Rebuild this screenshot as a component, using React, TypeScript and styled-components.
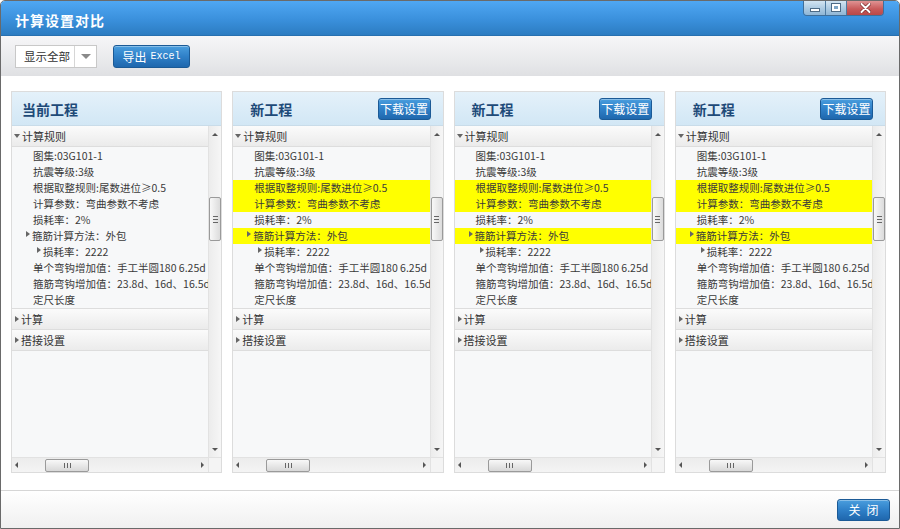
import React from 'react';
import styled, { createGlobalStyle } from 'styled-components';

const GlobalStyle = createGlobalStyle`
  html, body { margin: 0; padding: 0; background: #fff; }
  body { font-family: "Noto Sans CJK SC", "Noto Sans", sans-serif; }
  * { box-sizing: border-box; }
`;

const Window = styled.div`
  width: 900px;
  height: 529px;
  display: flex;
  flex-direction: column;
  border: 1px solid #6a6a6a;
  border-radius: 5px 5px 0 0;
  overflow: hidden;
  background: #fff;
`;

const TitleBar = styled.div`
  height: 35px;
  flex: none;
  display: flex;
  align-items: flex-start;
  justify-content: space-between;
  background: linear-gradient(#4fa7f3, #3a90dc 55%, #2c7cc1);
  border-bottom: 1px solid #2770b0;
`;

const Title = styled.div`
  color: #fff;
  font-size: 14px;
  font-weight: bold;
  letter-spacing: 1px;
  padding: 9px 0 0 14px;
`;

const Controls = styled.div`
  display: flex;
  margin-right: 15px;
  margin-top: -1px;
  border: 1px solid #3f6f9a;
  border-top: none;
  border-radius: 0 0 4px 4px;
  overflow: hidden;
  height: 16px;
`;

const CtrlBtn = styled.div<{ $close?: boolean; $w: number }>`
  width: ${p => p.$w}px;
  display: flex;
  align-items: center;
  justify-content: center;
  background: ${p =>
    p.$close
      ? 'linear-gradient(#e39a9a, #c85a5a 60%, #b94848)'
      : 'linear-gradient(#d8e8f4, #a9c8e0 60%, #8fb6d6)'};
  & + & { border-left: 1px solid #4e7aa0; }
`;

const MinGlyph = styled.div`
  width: 10px;
  height: 4px;
  background: #fff;
  border: 1px solid #4d6b86;
  margin-top: 4px;
`;

const MaxGlyph = styled.div`
  width: 10px;
  height: 9px;
  border: 1px solid #4d6b86;
  background: #fff;
  position: relative;
  &::after {
    content: '';
    position: absolute;
    left: 2px; top: 2px; right: 2px; bottom: 2px;
    background: #7fa6c6;
  }
`;

const Toolbar = styled.div`
  height: 40px;
  flex: none;
  display: flex;
  align-items: center;
  gap: 16px;
  padding-left: 14px;
  background: linear-gradient(#f6f6f8, #e9eaec 60%, #dfe0e3);
`;

const Select = styled.div`
  width: 82px;
  height: 23px;
  display: flex;
  align-items: center;
  background: #fff;
  border: 1px solid #c8c8c8;
  font-size: 11.5px;
  color: #333;
`;

const SelectText = styled.div`
  flex: 1;
  padding-left: 8px;
  border-right: 1px solid #d6d6d6;
  height: 100%;
  line-height: 21px;
`;

const SelectArrow = styled.div`
  width: 21px;
  display: flex;
  justify-content: center;
  &::before {
    content: '';
    border-left: 5px solid transparent;
    border-right: 5px solid transparent;
    border-top: 5px solid #8a8a8a;
  }
`;

const BlueButton = styled.div<{ $w: number; $h: number }>`
  width: ${p => p.$w}px;
  height: ${p => p.$h}px;
  display: flex;
  align-items: center;
  justify-content: center;
  color: #fff;
  font-size: 12px;
  border: 1px solid #1b5a96;
  border-radius: 3px;
  background: linear-gradient(#4a9ede, #2f80c8 50%, #1f67ad);
  box-shadow: inset 0 1px 0 rgba(255, 255, 255, 0.35);
`;

const Mono = styled.span`
  font-family: "Liberation Mono", monospace;
  font-size: 10px;
  margin-left: 4px;
`;

const Content = styled.div`
  flex: 1;
  display: grid;
  grid-template-columns: repeat(4, 1fr);
  gap: 10px;
  padding: 15px 13px 17px 10px;
  background: #fff;
`;

const Panel = styled.div`
  display: flex;
  flex-direction: column;
  border: 1px solid #dcdcdc;
  min-width: 0;
  background: #f7f8f9;
`;

const PanelHeader = styled.div`
  height: 34px;
  flex: none;
  display: flex;
  align-items: center;
  justify-content: space-between;
  padding: 0 12px 0 0;
  background: linear-gradient(#e4f1fa, #d2e7f5);
  border-bottom: 1px solid #c9dce9;
`;

const PanelTitle = styled.div`
  width: 76px;
  text-align: center;
  font-size: 14px;
  font-weight: bold;
  color: #1e4a78;
`;

const Tree = styled.div`
  flex: 1;
  display: grid;
  grid-template-columns: 1fr 13px;
  grid-template-rows: 1fr 15px;
  min-height: 0;
`;

const TreeBody = styled.div`
  overflow: hidden;
  font-size: 10.5px;
  color: #3a3a3a;
  white-space: nowrap;
`;

const SectionHead = styled.div<{ $open?: boolean }>`
  height: 21px;
  display: flex;
  align-items: center;
  padding-left: 1px;
  font-size: 11px;
  color: #333;
  background: linear-gradient(#fbfbfb, #ebebeb);
  border-bottom: 1px solid #dddddd;
  &::before {
    content: '';
    margin-right: 2px;
    ${p =>
      p.$open
        ? 'border-left: 3px solid transparent; border-right: 3px solid transparent; border-top: 4px solid #666; margin-left: 1px;'
        : 'border-top: 3px solid transparent; border-bottom: 3px solid transparent; border-left: 4px solid #666; margin-left: 2px;'}
  }
`;

const Items = styled.div`
  padding: 1px 0 0;
  border-bottom: 1px solid #dddddd;
`;

const Item = styled.div<{ $level: number; $hl?: boolean; $arrow?: boolean }>`
  height: 16px;
  line-height: 16px;
  display: flex;
  align-items: center;
  padding-left: ${p => (p.$arrow ? 14 : 21) + (p.$level - 1) * 11}px;
  background: ${p => (p.$hl ? '#ffff00' : 'transparent')};
  ${p =>
    p.$arrow
      ? `&::before {
          content: '';
          border-top: 3px solid transparent;
          border-bottom: 3px solid transparent;
          border-left: 4px solid #666;
          margin-right: 2px;
          margin-top: -4px;
        }`
      : ''}
`;

const VScroll = styled.div`
  display: flex;
  flex-direction: column;
  align-items: center;
  background: linear-gradient(90deg, #ececec, #f6f6f6);
  border-left: 1px solid #e2e2e2;
`;

const ArrowUp = styled.div`
  margin-top: 7px;
  border-left: 3px solid transparent;
  border-right: 3px solid transparent;
  border-bottom: 3px solid #555;
`;

const ArrowDown = styled.div`
  margin-bottom: 6px;
  border-left: 3px solid transparent;
  border-right: 3px solid transparent;
  border-top: 3px solid #555;
`;

const VThumb = styled.div`
  margin-top: 61px;
  width: 12px;
  height: 44px;
  border: 1px solid #9a9a9a;
  border-radius: 2px;
  background: linear-gradient(90deg, #f8f8f8, #dcdcdc);
  display: flex;
  align-items: center;
  justify-content: center;
  &::before {
    content: '';
    width: 5px;
    height: 5px;
    border-top: 1px solid #666;
    border-bottom: 1px solid #666;
    background: linear-gradient(transparent 40%, #666 40%, #666 60%, transparent 60%);
  }
`;

const Spacer = styled.div`
  flex: 1;
`;

const HScroll = styled.div`
  display: flex;
  align-items: center;
  padding: 0 4px 0 3px;
  background: linear-gradient(#ececec, #f4f4f4);
  border-top: 1px solid #e2e2e2;
`;

const ArrowLeft = styled.div`
  border-top: 3px solid transparent;
  border-bottom: 3px solid transparent;
  border-right: 3px solid #555;
`;

const ArrowRight = styled.div`
  border-top: 3px solid transparent;
  border-bottom: 3px solid transparent;
  border-left: 3px solid #555;
`;

const HThumb = styled.div`
  margin-left: 27px;
  width: 44px;
  height: 13px;
  border: 1px solid #9a9a9a;
  border-radius: 2px;
  background: linear-gradient(#f8f8f8, #d8d8d8);
  display: flex;
  align-items: center;
  justify-content: center;
  &::before {
    content: '';
    width: 5px;
    height: 5px;
    border-left: 1px solid #666;
    border-right: 1px solid #666;
    background: linear-gradient(90deg, transparent 40%, #666 40%, #666 60%, transparent 60%);
  }
`;

const Corner = styled.div`
  background: #f4f4f4;
  border-left: 1px solid #e2e2e2;
  border-top: 1px solid #e2e2e2;
`;

const Footer = styled.div`
  height: 38px;
  flex: none;
  display: flex;
  align-items: center;
  justify-content: flex-end;
  padding-right: 9px;
  border-top: 1px solid #d6d6d6;
  background: linear-gradient(#ffffff, #f0f0f0);
`;

const CloseText = styled.span`
  letter-spacing: 6px;
  margin-right: -6px;
`;

type Row = { text: React.ReactNode; level: number; hl?: boolean; arrow?: boolean };

const rows = (isNew: boolean): Row[] => [
  { text: '图集:03G101-1', level: 1 },
  { text: '抗震等级:3级', level: 1 },
  { text: '根据取整规则:尾数进位≥0.5', level: 1, hl: isNew },
  { text: '计算参数：弯曲参数不考虑', level: 1, hl: isNew },
  { text: '损耗率：2%', level: 1 },
  { text: '箍筋计算方法：外包', level: 1, hl: isNew, arrow: true },
  { text: '损耗率：2222', level: 2, arrow: true },
  { text: '单个弯钩增加值：手工半圆180 6.25d', level: 1 },
  { text: '箍筋弯钩增加值：23.8d、16d、16.5d', level: 1 },
  { text: '定尺长度', level: 1 },
];

const ProjectPanel: React.FC<{ title: string; isNew?: boolean }> = ({ title, isNew }) => (
  <Panel>
    <PanelHeader>
      <PanelTitle>{title}</PanelTitle>
      {isNew && (
        <BlueButton $w={53} $h={22}>
          下载设置
        </BlueButton>
      )}
    </PanelHeader>
    <Tree>
      <TreeBody>
        <SectionHead $open>计算规则</SectionHead>
        <Items>
          {rows(!!isNew).map((r, i) => (
            <Item key={i} $level={r.level} $hl={r.hl} $arrow={r.arrow}>
              {r.text}
            </Item>
          ))}
        </Items>
        <SectionHead>计算</SectionHead>
        <SectionHead>搭接设置</SectionHead>
      </TreeBody>
      <VScroll>
        <ArrowUp />
        <VThumb />
        <Spacer />
        <ArrowDown />
      </VScroll>
      <HScroll>
        <ArrowLeft />
        <HThumb />
        <Spacer />
        <ArrowRight />
      </HScroll>
      <Corner />
    </Tree>
  </Panel>
);

const App: React.FC = () => (
  <>
    <GlobalStyle />
    <Window>
      <TitleBar>
        <Title>计算设置对比</Title>
        <Controls>
          <CtrlBtn $w={21}>
            <MinGlyph />
          </CtrlBtn>
          <CtrlBtn $w={21}>
            <MaxGlyph />
          </CtrlBtn>
          <CtrlBtn $w={37} $close>
            <svg width="11" height="10" viewBox="0 0 11 10">
              <path d="M1.5 1 L9.5 9 M9.5 1 L1.5 9" stroke="#7a2a2a" strokeWidth="3.4" strokeLinecap="round" />
              <path d="M1.5 1 L9.5 9 M9.5 1 L1.5 9" stroke="#fff" strokeWidth="2" strokeLinecap="round" />
            </svg>
          </CtrlBtn>
        </Controls>
      </TitleBar>
      <Toolbar>
        <Select>
          <SelectText>显示全部</SelectText>
          <SelectArrow />
        </Select>
        <BlueButton $w={77} $h={23}>
          导出<Mono>Excel</Mono>
        </BlueButton>
      </Toolbar>
      <Content>
        <ProjectPanel title="当前工程" />
        <ProjectPanel title="新工程" isNew />
        <ProjectPanel title="新工程" isNew />
        <ProjectPanel title="新工程" isNew />
      </Content>
      <Footer>
        <BlueButton $w={53} $h={22}>
          <CloseText>关闭</CloseText>
        </BlueButton>
      </Footer>
    </Window>
  </>
);

export default App;
